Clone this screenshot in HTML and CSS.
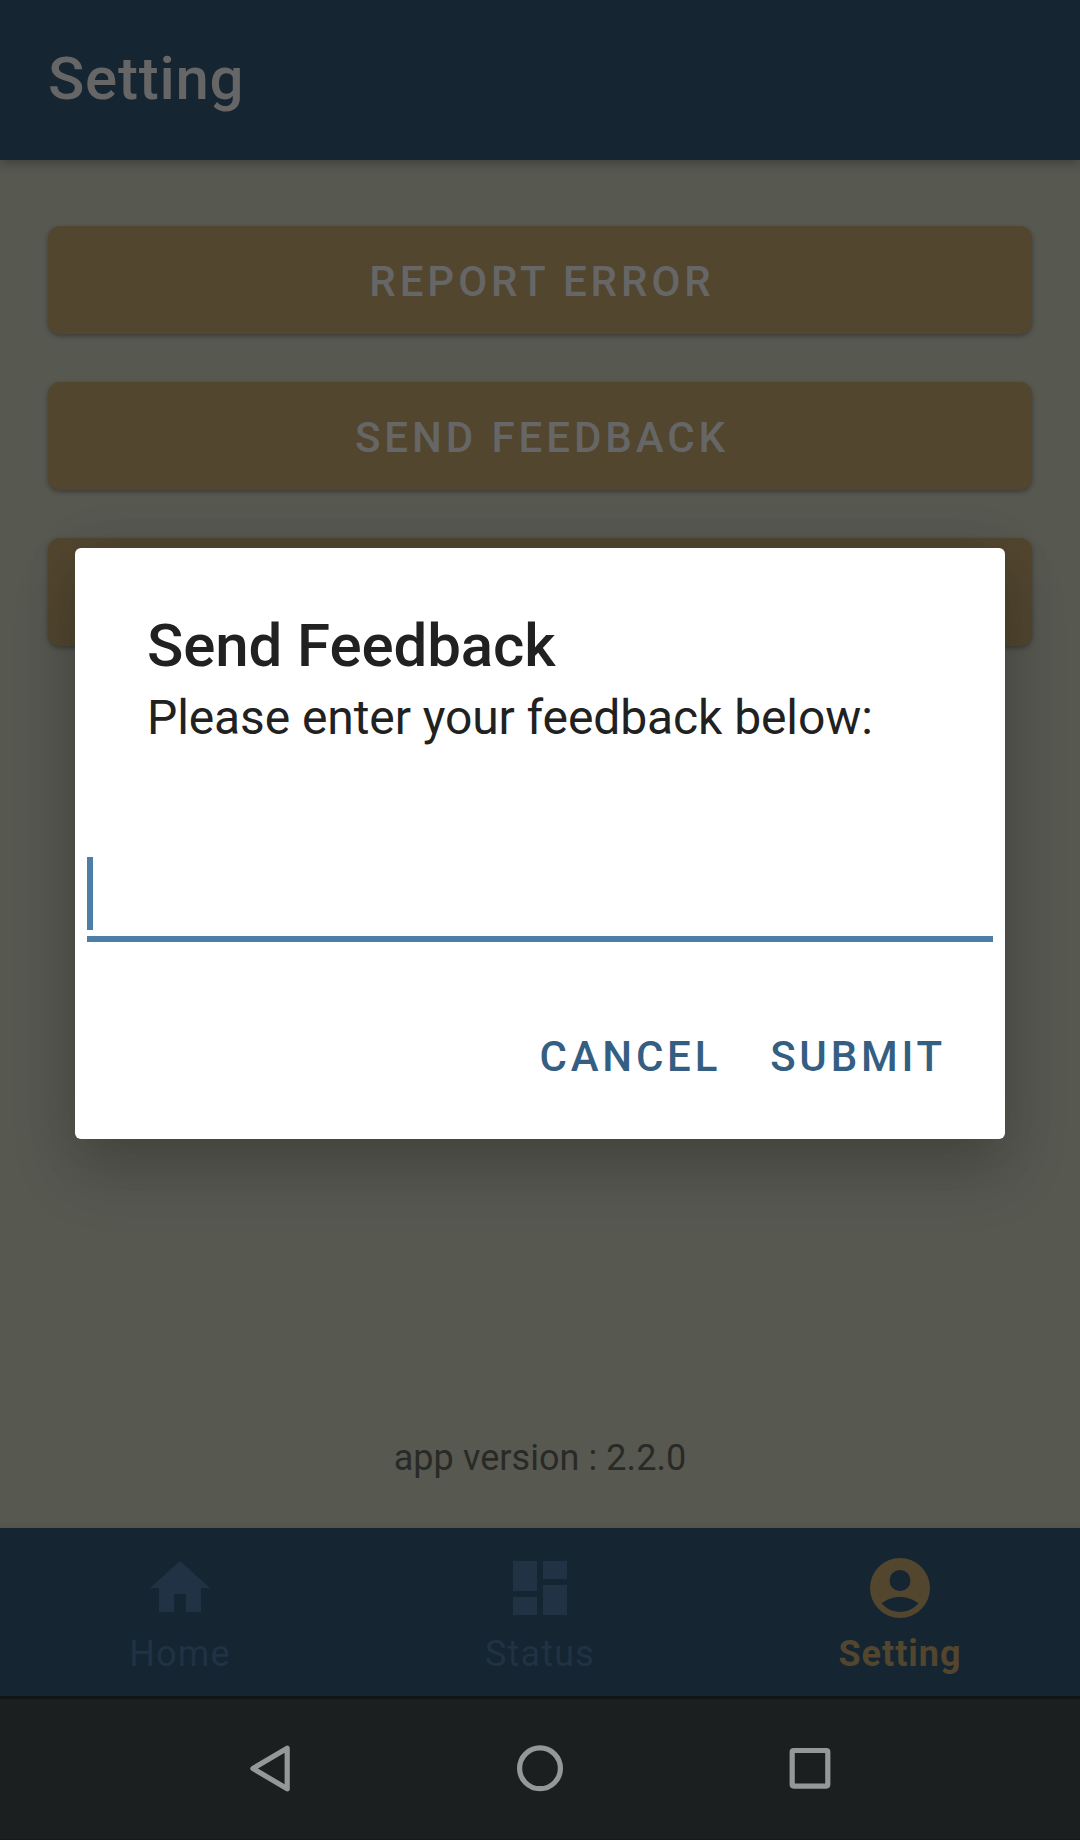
FILE: index.html
```html
<!DOCTYPE html>
<html lang="en">
<head>
<meta charset="utf-8">
<title>Setting</title>
<link rel="stylesheet" href="styles.css">
</head>
<body>
<div class="screen">
  <header class="app-bar"><h1 class="app-title">Setting</h1></header>
  <main class="content">
    <button class="action">REPORT ERROR</button>
    <button class="action">SEND FEEDBACK</button>
    <button class="action"></button>
    <p class="version">app version : 2.2.0</p>
  </main>
  <nav class="tabs">
    <a class="tab">
      <svg class="tab-icon" viewBox="0 0 24 24"><path d="M10 20v-6h4v6h5v-8h3L12 3 2 12h3v8z"/></svg>
      <span>Home</span>
    </a>
    <a class="tab">
      <svg class="tab-icon" viewBox="0 0 24 24"><path d="M3 13h8V3H3v10zm0 8h8v-6H3v6zm10 0h8V11h-8v10zm0-18v6h8V3h-8z"/></svg>
      <span>Status</span>
    </a>
    <a class="tab tab-active">
      <svg class="tab-icon" viewBox="0 0 24 24"><path fill-rule="evenodd" d="M12 2a10 10 0 1 0 0 20 10 10 0 0 0 0-20zM12 6a3.5 3.5 0 1 1 0 7 3.5 3.5 0 0 1 0-7zM12 20c-2.300 0-4.550-.95-6.140-2.880C7.550 15.800 9.680 15 12 15s4.450.8 6.140 2.120C16.550 19.050 14.300 20 12 20z"/></svg>
      <span>Setting</span>
    </a>
  </nav>
  <div class="system-bar">
    <svg class="system-icon" viewBox="0 0 60 60"><path d="M47.200 10.200v40.600L12.900 30.500z"/></svg>
    <svg class="system-icon" viewBox="0 0 60 60"><circle cx="30" cy="30.300" r="20.400"/></svg>
    <svg class="system-icon" viewBox="0 0 60 60"><rect x="12.200" y="12.500" width="35.600" height="35.600" rx="1.500"/></svg>
  </div>
</div>
<div class="overlay">
  <section class="dialog" role="dialog">
    <h2 class="dialog-title">Send Feedback</h2>
    <p class="dialog-message">Please enter your feedback below:</p>
    <div class="field"><span class="caret"></span></div>
    <div class="dialog-actions">
      <button class="text-button">CANCEL</button>
      <button class="text-button">SUBMIT</button>
    </div>
  </section>
</div>
</body>
</html>
```
FILE: styles.css
```css
* { box-sizing: border-box; margin: 0; padding: 0; }

body {
  width: 1080px;
  height: 1840px;
  overflow: hidden;
  font-family: Roboto, "Liberation Sans", sans-serif;
  color: #212121;
}

button { border: 0; background: none; font: inherit; }

.screen {
  display: flex;
  flex-direction: column;
  height: 1840px;
  background: #575850;
}

.app-bar {
  display: flex;
  align-items: center;
  height: 160px;
  padding: 0 48px 3px;
  background: #162532;
  box-shadow: 0 4px 10px rgba(0, 0, 0, 0.26);
}

.app-title {
  font-size: 60px;
  line-height: 70px;
  font-weight: 500;
  letter-spacing: 0.75px;
  color: #666;
}

.content {
  flex: 1;
  display: flex;
  flex-direction: column;
  gap: 48px;
  padding: 66px 48px 0;
}

.action {
  height: 108px;
  padding: 3px 0 0 4px;
  border-radius: 12px;
  background: #52462f;
  box-shadow: 0 2px 5px rgba(0, 0, 0, 0.32);
  color: #666;
  font-size: 42px;
  font-weight: 500;
  line-height: 48px;
  letter-spacing: 3.95px;
}

.version {
  margin: auto 0 49px;
  text-align: center;
  font-size: 36px;
  line-height: 42px;
  letter-spacing: 0.06px;
  color: #292a27;
}

.tabs {
  display: grid;
  grid-template-columns: repeat(3, 1fr);
  height: 168px;
  background: #162532;
  box-shadow: 0 -1px 8px rgba(0, 0, 0, 0.08);
}

.tab {
  display: flex;
  flex-direction: column;
  align-items: center;
  gap: 9px;
  padding-top: 24px;
  color: #203243;
  font-size: 36px;
  line-height: 42px;
  letter-spacing: 1.2px;
}

.tab-active { color: #52462f; font-weight: 700; letter-spacing: 1px; }

.tab-icon { width: 72px; height: 72px; fill: currentColor; }

.system-bar {
  display: flex;
  align-items: center;
  justify-content: center;
  gap: 210px;
  height: 144px;
  padding-bottom: 3px;
  border-top: 3px solid #121516;
  border-bottom: 1px solid #171a1b;
  background: #1c1f20;
}

.system-icon {
  width: 60px;
  height: 60px;
  fill: none;
  stroke: #969798;
  stroke-width: 5.2;
  stroke-linejoin: round;
}

.overlay {
  position: absolute;
  top: 0;
  left: 0;
  width: 1080px;
  height: 1687px;
  display: flex;
  align-items: center;
  justify-content: center;
}

.dialog {
  width: 930px;
  height: 591px;
  padding-top: 63px;
  border-radius: 6px;
  background: #fff;
  box-shadow: 0 32px 64px rgba(0, 0, 0, 0.18), 0 4px 56px rgba(0, 0, 0, 0.1);
}

.dialog-title {
  padding-left: 72px;
  font-size: 60px;
  line-height: 70px;
  font-weight: 500;
  letter-spacing: -0.1px;
}

.dialog-message {
  margin-top: 9px;
  padding-left: 72px;
  font-size: 48px;
  line-height: 56px;
  letter-spacing: -0.1px;
}

.field {
  display: flex;
  height: 85px;
  margin: 111px 12px 0;
  border-bottom: 6px solid #4d7ea8;
}

.caret { width: 6px; height: 73px; background: #4d7ea8; }

.dialog-actions {
  display: flex;
  justify-content: flex-end;
  gap: 49px;
  margin-top: 91px;
  padding-right: 59px;
}

.text-button {
  color: #355f82;
  font-size: 42px;
  font-weight: 500;
  line-height: 48px;
  letter-spacing: 3.8px;
}
```
